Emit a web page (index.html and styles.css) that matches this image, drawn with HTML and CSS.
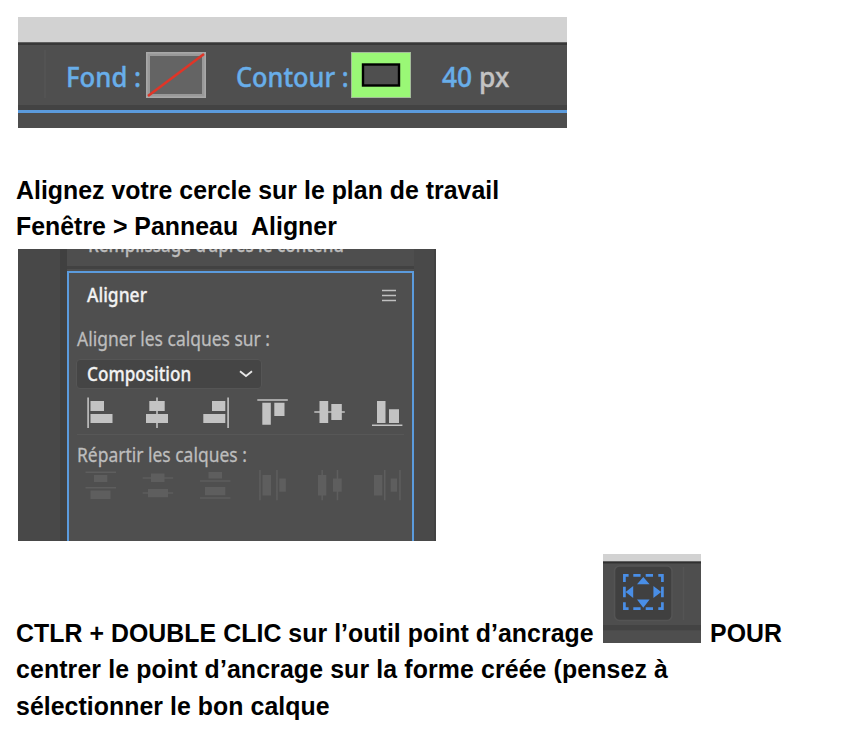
FILE: index.html
```html
<!DOCTYPE html>
<html lang="fr">
<head>
<meta charset="utf-8">
<title>Aligner un cercle</title>
<link rel="stylesheet" href="styles.css">
</head>
<body>
<main class="doc">
  <section class="toolbar">
    <div class="toolbar-top"></div>
    <div class="toolbar-row">
      <span class="divider"></span>
      <span class="tool-label fond">Fond :</span>
      <svg class="swatch" width="60" height="46" viewBox="0 0 60 46">
        <rect width="60" height="46" fill="#a8a8a8"/>
        <rect x="1.5" y="1.5" width="57" height="43" fill="#999"/>
        <rect x="4" y="4" width="52" height="38" fill="#646464"/>
        <path d="M2 44 58 2" stroke="#e03527" stroke-width="2.5"/>
      </svg>
      <span class="tool-label contour">Contour :</span>
      <svg class="swatch" width="60" height="46" viewBox="0 0 60 46">
        <rect width="60" height="46" fill="#a4bc9a"/>
        <rect x="1" y="1" width="58" height="44" fill="#9af876"/>
        <rect x="12" y="12.5" width="36" height="21" fill="#4f4f4f" stroke="#000" stroke-width="2.4"/>
      </svg>
      <span class="tool-label size">40 <span class="unit">px</span></span>
    </div>
    <div class="toolbar-stripe"></div>
    <div class="toolbar-bottom"></div>
  </section>

  <p class="text intro">Alignez votre cercle sur le plan de travail<br>Fenêtre &gt; Panneau&nbsp; Aligner</p>

  <section class="panel-shot">
    <div class="side-left"></div>
    <div class="center">
      <div class="previous"><span class="ui previous-label">Remplissage d’après le contenu</span></div>
      <div class="panel">
        <div class="panel-head">
          <span class="ui title">Aligner</span>
          <svg width="16" height="14" viewBox="0 0 16 14"><path d="M1 1.5h14M1 6.5h14M1 11.5h14" stroke="#c0c0c0" stroke-width="1.6"/></svg>
        </div>
        <div class="ui label">Aligner les calques sur :</div>
        <div class="select">
          <span class="ui value">Composition</span>
          <svg width="14" height="8" viewBox="0 0 14 8"><path d="M1 1.2 7 6 13 1.2" fill="none" stroke="#e8e8e8" stroke-width="1.8"/></svg>
        </div>
        <div class="icons">
          <svg viewBox="85 396 32 33"><path d="M87.3 397.5h1.6v30.5h-1.6zM90.5 401h13.5v10h-13.5zM90.5 414h22v9h-22z"/></svg>
          <svg viewBox="142 396 32 33"><path d="M156.2 397.5h1.6v30.5h-1.6zM149.3 401h15.4v10h-15.4zM146 414h22v9h-22z"/></svg>
          <svg viewBox="199 396 32 33"><path d="M227.3 397.5h1.6v30.5h-1.6zM212 401h13.3v10h-13.3zM203.3 414h22v9h-22z"/></svg>
          <svg viewBox="257 396 32 33"><path d="M257.3 399.2h30.5v1.6h-30.5zM262.3 402.7h8.5v22h-8.5zM274.3 402.7h10.2v13.3h-10.2z"/></svg>
          <svg viewBox="314 396 32 33"><path d="M314.3 411.2h30.5v1.6h-30.5zM319.5 401h8.7v22h-8.7zM331.3 404h10.5v16h-10.5z"/></svg>
          <svg viewBox="371 396 32 33"><path d="M372 424.4h30.4v1.7h-30.4zM377 401h8.5v22h-8.5zM389 409.3h10v13.7h-10z"/></svg>
        </div>
        <div class="rule"></div>
        <div class="ui label spread">Répartir les calques :</div>
        <div class="icons disabled">
          <svg viewBox="85 469 32 33"><path d="M85.5 471.5h30.5v1.5h-30.5zM94 475h13.3v7h-13.3zM85.5 487h30.5v1.5h-30.5zM90.5 490.5h20v8.5h-20z"/></svg>
          <svg viewBox="142 469 32 33"><path d="M142.7 477.2h30.5v1.5h-30.5zM151 473.5h13.5v8.5h-13.5zM142.7 492.2h30.5v1.5h-30.5zM148 489h20v8.3h-20z"/></svg>
          <svg viewBox="199 469 32 33"><path d="M208.5 472h13.5v6.5h-13.5zM200 480.2h30.4v1.5h-30.4zM205 487h20.3v8.3h-20.3zM200 497.2h30.4v1.5h-30.4z"/></svg>
          <svg viewBox="257 469 32 33"><path d="M259.2 470h1.5v30.3h-1.5zM262.5 475h8.5v20.5h-8.5zM276.2 470h1.5v30.3h-1.5zM279.3 478.5h6.5v13.3h-6.5z"/></svg>
          <svg viewBox="314 469 32 33"><path d="M321.4 470h1.5v30.3h-1.5zM318 475h8.3v20.5h-8.3zM336.7 470h1.5v30.3h-1.5zM333 478.5h8.7v13.3h-8.7z"/></svg>
          <svg viewBox="371 469 32 33"><path d="M374 475h8.3v20.5h-8.3zM384 470h1.5v30.3h-1.5zM390.7 478.5h6.3v13.3h-6.3zM399.2 470h1.5v30.3h-1.5z"/></svg>
        </div>
      </div>
    </div>
    <div class="side-right"></div>
  </section>

  <p class="text outro"><span class="ctlr">CTLR + DOUBLE CLIC sur l’outil point d’ancrage</span><svg class="anchor-tool" width="98" height="89" viewBox="0 0 98 89">
    <rect width="98" height="89" fill="#4e4e4e"/>
    <rect width="98" height="7" fill="#d2d2d2"/>
    <rect y="7" width="98" height="1" fill="#606060"/>
    <rect y="8" width="98" height="1.4" fill="#303030"/>
    <rect x="11.5" y="12" width="57.5" height="54.5" rx="5" fill="#404040" stroke="#545454" stroke-width="1.6"/>
    <path d="M80.5 13v53" stroke="#545454" stroke-width="1.5"/>
    <rect y="71" width="98" height="5.3" fill="#434343"/>
    <path d="M21.4 28V21.4H25.6M30.3 21.4h7.3M42.7 21.4h7.3M55.3 21.4H59.4V28M59.4 32.8v10.4M59.4 48.3V54.7H55.3M50 54.7h-7.3M37.6 54.7h-7.3M25.6 54.7H21.4V48.3M21.4 43.2V32.8" fill="none" stroke="#498ee6" stroke-width="2.7"/>
    <path d="M40.3 23 46.6 30.2H34zM40.3 53.8 34 45.6H46.6zM22.6 38 30.2 32v12zM58.2 38l-7.8-6v12z" fill="#498ee6"/>
  </svg><span class="pour">POUR</span><br><span class="wide">centrer le point d’ancrage sur la forme créée (pensez à</span><br>sélectionner le bon calque</p>
</main>
</body>
</html>
```
FILE: styles.css
```css
* { box-sizing: border-box; }
body { margin: 0; background: #fff; }
.doc { padding: 17px 0 0 16px; width: 861px; height: 756px; overflow: hidden; }
svg { display: block; flex: none; }

.text {
  margin: 0;
  font: bold 24.85px/36.4px "Liberation Sans", Arial, sans-serif;
  color: #000;
  white-space: nowrap;
}
.intro { margin-top: 45px; height: 76px; letter-spacing: .03px; }

.toolbar, .panel-shot { margin-left: 2px; }
.toolbar { width: 549px; height: 111px; background: #4f4f4f; overflow: hidden; }
.toolbar-top { height: 28px; background: #d2d2d2; border-bottom: 2px solid #383838; box-shadow: inset 0 -1px #606060; }
.toolbar-row { height: 60px; display: flex; padding-top: 7px; }
.divider { width: 2px; height: 48px; margin: -2px 0 0 26px; background: #535353; }
.tool-label {
  flex: none;
  font: 500 27.5px/46px "Noto Sans", sans-serif;
  color: #68aeea;
  -webkit-text-stroke: .4px;
  white-space: nowrap;
  transform-origin: 0 50%;
  transform: translateY(2px) scaleX(.92);
}
.fond { width: 80px; margin-left: 20px; transform: translateY(2px) scaleX(.935); }
.contour { width: 115px; margin-left: 30px; }
.size { margin-left: 31px; transform: translateY(2px) scaleX(.96); }
.unit { color: #c3c3c3; }
.toolbar-stripe { height: 8px; background: #434343; border-bottom: 3px solid #5b9bdd; }
.toolbar-bottom { height: 15px; background: #4d4d4d; }

.panel-shot { width: 418px; height: 292px; display: flex; background: #4e4e4e; overflow: hidden; }
.side-left { width: 49px; background: #484848; border-right: 7px solid #404040; }
.side-right { width: 22px; background: #494949; border-right: 2px solid #424242; }
.center { width: 347px; }
.ui {
  display: block;
  font: 500 19.5px/24px "Noto Sans", sans-serif;
  -webkit-text-stroke: .3px;
  white-space: nowrap;
  transform-origin: 0 50%;
  transform: scaleX(.895);
}
.previous { height: 22px; padding: 0 0 0 21px; overflow: hidden; background: linear-gradient(#4e4e4e 17px, #424242 17px, #424242 20px, #4e4e4e 20px); }
.previous-label { margin-top: -12px; line-height: 16px; color: #bcbcbc; transform: scaleX(.873); }
.panel { height: 270px; padding-left: 8px; border: 2px solid #5b9bdd; border-bottom: 0; background: #4f4f4f; }
.panel-head { height: 54px; display: flex; justify-content: space-between; padding: 10px 15px 0 10px; }
.panel-head svg { margin-top: 6px; }
.title { color: #f2f2f2; }
.label { font-weight: 400; color: #bdbdbd; height: 31px; }
.select { width: 186px; height: 30px; margin: 1px 0 0 -1px; padding: 0 8px 0 10px; display: flex; align-items: center; justify-content: space-between; background: #454545; border: 1px solid #555; border-radius: 4px; }
.value { color: #f2f2f2; transform: scaleX(.88); }
.icons { display: grid; grid-template-columns: 57px 57px 58px 57px 57px 32px; margin: 7px 0 0 8px; fill: #c3c3c3; }
.icons svg { width: 32px; height: 33px; }
.rule { width: 327px; height: 1px; margin-top: 5px; background: #575757; }
.spread { height: 24px; margin-top: 8px; }
.disabled { fill: #5e5e5e; margin-top: 2px; }

.outro { margin-top: 13px; letter-spacing: .06px; }
.ctlr { display: inline-block; width: 587px; }
.wide { letter-spacing: .13px; }
.anchor-tool { display: inline-block; vertical-align: -1px; }
.pour { margin-left: 9px; }
```
